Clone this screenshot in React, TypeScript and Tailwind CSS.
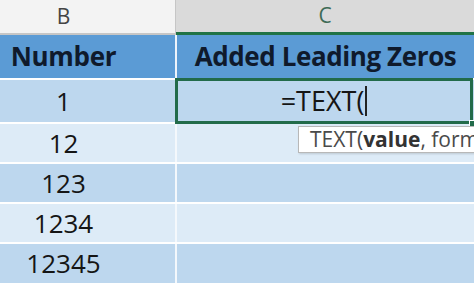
import React from 'react'

const rows = [
  { value: '1', h: 'h-[42px]', bg: 'bg-[#bdd7ee]' },
  { value: '12', h: 'h-[38px]', bg: 'bg-[#ddebf7]' },
  { value: '123', h: 'h-[38px]', bg: 'bg-[#bdd7ee]' },
  { value: '1234', h: 'h-[38px]', bg: 'bg-[#ddebf7]' },
  { value: '12345', h: 'h-[39px]', bg: 'bg-[#bdd7ee]' },
]

export default function App() {
  return (
    <div className="relative h-[291px] w-[474px] overflow-hidden bg-white font-['Open_Sans',sans-serif]">
      {/* column letters */}
      <div className="flex h-[35px]">
        <div className="flex w-[175px] items-center justify-center border-b-2 border-[#c6c6c6] bg-[#f3f3f3] pr-[48px] text-[21px] text-[#444]">
          B
        </div>
        <div className="w-px bg-[#c6c6c6]" />
        <div className="flex flex-1 items-center justify-center border-b-[3px] border-[#217346] bg-[#dadada] text-[21px] text-[#3e6b55]">
          C
        </div>
      </div>

      {/* header row */}
      <div className="flex h-[43px] bg-[#5b9bd5] text-[26px] font-bold text-[#0f1a2c]">
        <div className="flex w-[175px] items-center justify-center pr-[48px] tracking-[-0.3px]">Number</div>
        <div className="w-[2px] bg-[#eef4fb]" />
        <div className="flex flex-1 items-center justify-center tracking-[-0.4px]">Added Leading Zeros</div>
      </div>

      {/* data rows */}
      <div className="flex flex-col gap-[2px] pt-[2px]">
        {rows.map((r) => (
          <div key={r.value} className={`flex ${r.h} ${r.bg}`}>
            <div className="flex w-[175px] items-center justify-center pr-[48px] text-[26px] text-[#151515]">
              {r.value}
            </div>
            <div className="w-[2px] bg-[#f4f8fc]" />
            <div className="flex-1" />
          </div>
        ))}
      </div>

      {/* active cell */}
      <div className="absolute left-[175px] top-[78px] flex h-[46px] w-[298px] items-center justify-center border-[3px] border-[#226b4a] bg-[#bdd7ee]">
        <span className="text-[27px] text-[#151515]">=TEXT(</span>
        <span className="ml-px h-[30px] w-[2px] bg-[#222]" />
      </div>
      <div className="absolute left-[469px] top-[120px] h-[7px] w-[7px] border border-white bg-[#226b4a]" />

      {/* function tooltip */}
      <div className="absolute left-[298px] top-[126px] flex h-[27px] w-[200px] items-center border border-[#b8b8b8] bg-white pl-[11px] text-[21px] leading-none text-[#4a4a4a] shadow-[1px_1px_2px_rgba(0,0,0,0.15)]">
        <span className="whitespace-nowrap">
          TEXT(<b className="font-bold text-[#333]">value</b>, format_text)
        </span>
      </div>
    </div>
  )
}
